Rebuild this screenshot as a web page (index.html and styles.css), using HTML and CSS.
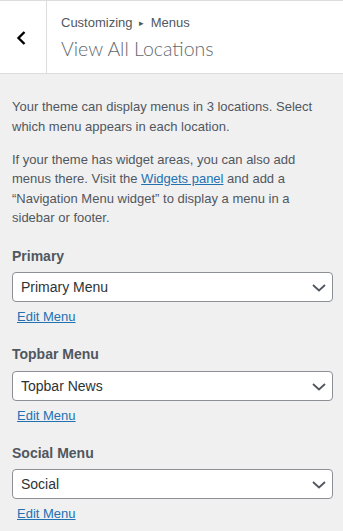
FILE: index.html
```html
<!DOCTYPE html>
<html lang="en">
<head>
    <meta charset="UTF-8">
    <meta name="viewport" content="width=device-width, initial-scale=1.0">
    <title>Menus - View All Locations</title>
    <link rel="stylesheet" href="styles.css">
</head>
<body>

<div class="panel">
    <div class="panel-header">
        <button class="back-button" aria-label="Back">
            <svg width="46" height="72" viewBox="0 0 46 72">
                <polyline points="24.5,31 18.5,37 24.5,43" fill="none" stroke="#000" stroke-width="2.4"/>
            </svg>
        </button>
        <div class="panel-title">
            <span class="breadcrumb">Customizing <span class="arrow">&#9656;</span> Menus</span>
            <h3>View All Locations</h3>
        </div>
    </div>

    <div class="panel-body">
        <div class="description">
            <p>Your theme can display menus in 3 locations. Select which menu appears in each location.</p>
            <p>If your theme has widget areas, you can also add menus there. Visit the <a href="#">Widgets panel</a> and add a &#8220;Navigation Menu widget&#8221; to display a menu in a sidebar or footer.</p>
        </div>

        <div class="location">
            <label for="loc-primary">Primary</label>
            <div class="select-wrap">
                <select id="loc-primary"><option>Primary Menu</option></select>
                <svg class="select-arrow" width="14" height="8" viewBox="0 0 14 8"><polyline points="1,1 7,6.5 13,1" fill="none" stroke="#50575e" stroke-width="1.8"/></svg>
            </div>
            <a href="#" class="edit-link">Edit Menu</a>
        </div>

        <div class="location">
            <label for="loc-topbar">Topbar Menu</label>
            <div class="select-wrap">
                <select id="loc-topbar"><option>Topbar News</option></select>
                <svg class="select-arrow" width="14" height="8" viewBox="0 0 14 8"><polyline points="1,1 7,6.5 13,1" fill="none" stroke="#50575e" stroke-width="1.8"/></svg>
            </div>
            <a href="#" class="edit-link">Edit Menu</a>
        </div>

        <div class="location">
            <label for="loc-social">Social Menu</label>
            <div class="select-wrap">
                <select id="loc-social"><option>Social</option></select>
                <svg class="select-arrow" width="14" height="8" viewBox="0 0 14 8"><polyline points="1,1 7,6.5 13,1" fill="none" stroke="#50575e" stroke-width="1.8"/></svg>
            </div>
            <a href="#" class="edit-link">Edit Menu</a>
        </div>
    </div>
</div>

</body>
</html>
```

FILE: styles.css
```css
body {
    margin: 0;
    background: #f0f0f1;
    font-family: "Liberation Sans", Arial, sans-serif;
    color: #50575e;
}
.panel-header {
    display: flex;
    height: 72px;
    background: #fff;
    border-top: 1px solid #dcdcde;
    border-bottom: 1px solid #dcdcde;
}
.back-button {
    width: 47px;
    padding: 0;
    border: none;
    border-right: 1px solid #dcdcde;
    background: #fff;
    cursor: pointer;
}
.back-button svg {
    display: block;
}
.panel-title {
    padding: 12px 0 0 14px;
}
.breadcrumb {
    display: block;
    font-size: 13px;
    line-height: 20px;
}
.breadcrumb .arrow {
    font-size: 9px;
    vertical-align: 1px;
    margin: 0 3px;
}
.panel-title h3 {
    margin: 2px 0 0;
    font-family: Lato, "Liberation Sans", sans-serif;
    font-size: 19.5px;
    font-weight: 300;
    line-height: 28px;
    color: #646970;
}
.panel-body {
    padding: 0 10px 0 12px;
}
.description {
    padding-top: 23px;
    font-size: 13px;
    line-height: 19.5px;
}
.description p {
    margin: 0 0 13.5px;
}
.description p:last-child {
    margin-bottom: 0;
}
.description a,
.edit-link {
    color: #2271b1;
    text-decoration: underline;
}
.location {
    padding-top: 18px;
}
.location + .location {
    padding-top: 17.5px;
}
.location label {
    display: block;
    font-size: 14px;
    font-weight: 700;
    line-height: 20px;
}
.select-wrap {
    position: relative;
    margin-top: 6.5px;
    width: 321px;
}
.select-wrap select {
    display: block;
    width: 100%;
    height: 30px;
    padding: 0 24px 0 8px;
    border: 1px solid #8c8f94;
    border-radius: 4px;
    background: #fff;
    font-family: inherit;
    font-size: 14px;
    color: #2c3338;
    appearance: none;
    -webkit-appearance: none;
}
.select-arrow {
    position: absolute;
    right: 7px;
    top: 12px;
    pointer-events: none;
}
.edit-link {
    display: inline-block;
    margin: 5px 0 0 5px;
    font-size: 13px;
    line-height: 19.5px;
}
```
